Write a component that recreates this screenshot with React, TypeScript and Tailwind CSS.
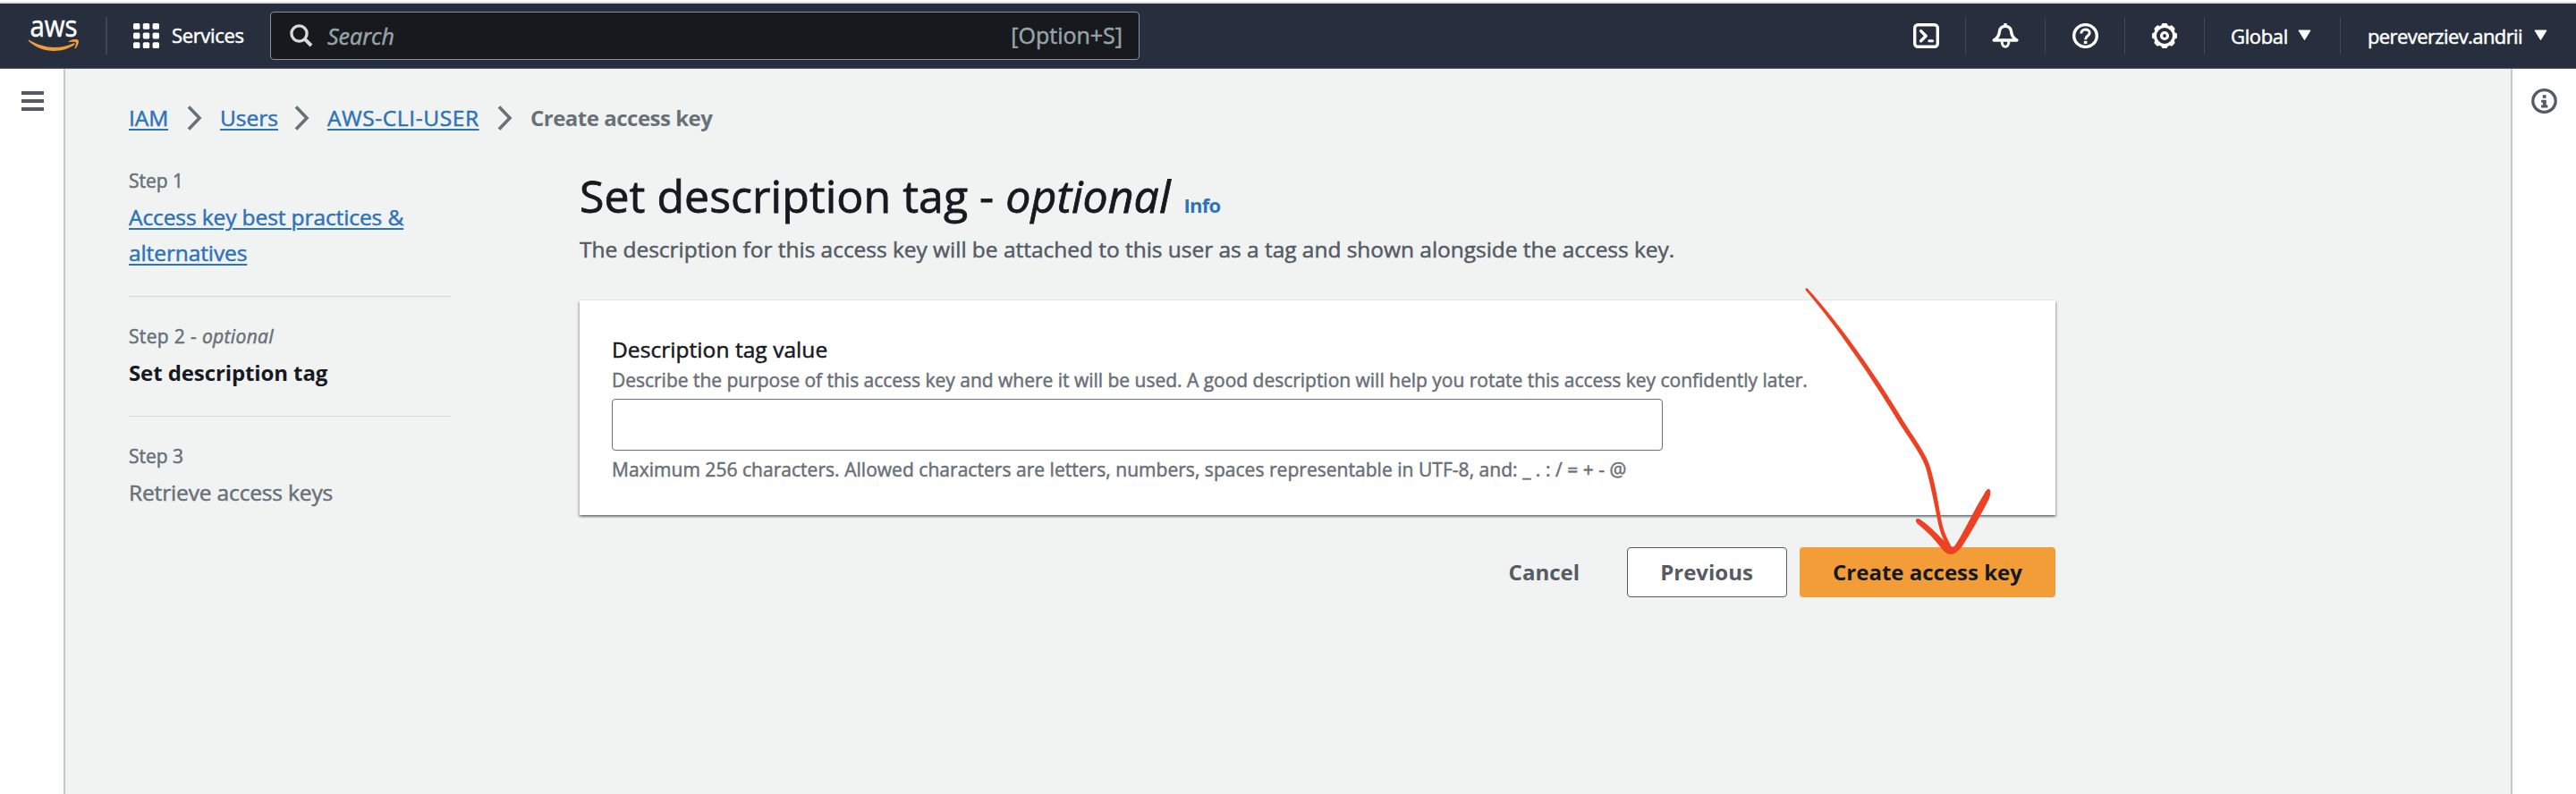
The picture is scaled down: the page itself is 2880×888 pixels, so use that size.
import React from "react";
import type { ReactNode } from "react";

function AwsLogo() {
  return (
    <svg width="60" height="72" viewBox="0 -16 60 72" className="block shrink-0 overflow-visible">
      <text x="1.5" y="20.8" fontSize="32" fontFamily="'Open Sans', sans-serif" fill="#fff" stroke="#fff" strokeWidth="0.5" textLength="53" lengthAdjust="spacingAndGlyphs">
        aws
      </text>
      <path
        d="M0.3 24.6 C17 34.5 34 35.5 50 28.4 C51.5 27.8 52.4 29.2 51 30.3 C37 40 14 39.5 0 26 C-0.5 25.3 -0.2 24.4 0.3 24.6 Z"
        fill="#f29d38"
      />
      <path
        d="M44.8 26.2 C48 23.8 54.6 23.6 55.6 24.9 C56.6 26.4 55.2 31.6 52.3 34.2 C51.7 34.7 51.2 34.4 51.5 33.7 C52.4 31.4 53.4 28.2 52.9 27.4 C52.2 26.5 48.2 26.6 45.4 27 C44.6 27.1 44.4 26.5 44.8 26.2 Z"
        fill="#f29d38"
      />
    </svg>
  );
}

function GridIcon() {
  return (
    <svg width="29" height="28" viewBox="0 0 29 28" className="block" fill="#fff">
      {[0, 10.8, 21.6].map((x) =>
        [0, 10.6, 21.2].map((y) => <rect key={`${x}-${y}`} x={x} y={y} width="7.4" height="6.8" rx="1.6" />)
      )}
    </svg>
  );
}

function SearchIcon() {
  return (
    <svg width="26" height="26" viewBox="0 0 26 26" className="block" fill="none" stroke="#d5dbdb">
      <circle cx="10.5" cy="10.5" r="8.6" strokeWidth="3.4" />
      <path d="M16.7 16.7 L24 24" strokeWidth="4" />
    </svg>
  );
}

function TerminalIcon() {
  return (
    <svg width="29" height="28" viewBox="0 0 29 28" className="block" fill="none" stroke="#fff" strokeWidth="3.4">
      <rect x="1.7" y="1.7" width="25.6" height="24.6" rx="3.6" />
      <path d="M8.6 8.6 L14.2 14.2 L8.6 19.8" strokeLinecap="round" strokeLinejoin="round" />
      <path d="M17.8 19.8 H21.6" strokeLinecap="round" strokeWidth="3" />
    </svg>
  );
}

function BellIcon() {
  return (
    <svg width="30" height="28" viewBox="0 0 30 28" className="block" fill="none" stroke="#fff" strokeWidth="3.4" strokeLinejoin="round">
      <path d="M2.2 19 C6.5 16.5 8 13.5 8.4 9.5 C8.9 5 11.6 3.4 15 3.4 C18.4 3.4 21.1 5 21.6 9.5 C22 13.5 23.5 16.5 27.8 19 Z" />
      <path d="M15 0 V3" />
      <path d="M11.2 20.5 C11 28.2 19 28.2 18.8 20.5" strokeWidth="3" />
    </svg>
  );
}

function HelpIcon() {
  return (
    <svg width="29" height="28" viewBox="0 0 29 28" className="block" fill="none" stroke="#fff" strokeWidth="3.4">
      <ellipse cx="14.5" cy="14" rx="12.8" ry="12.4" />
      <path d="M9.8 11.4 C9.8 5.6 19.2 5.6 19.2 10.8 C19.2 14.2 14.6 13.8 14.6 18.2" strokeWidth="3" />
      <path d="M12.8 21.4 H16.4" strokeWidth="3.2" />
    </svg>
  );
}

function GearIcon() {
  return (
    <svg width="30" height="28" viewBox="0 0 30 28" className="block" fill="none" stroke="#fff">
      <circle cx="15" cy="14" r="10.6" strokeWidth="3.2" />
      {[0, 45, 90, 135, 180, 225, 270, 315].map((a) => (
        <path key={a} d="M12.2 2.4 Q12.4 0.8 13.2 0.8 H16.8 Q17.6 0.8 17.8 2.4" fill="#fff" strokeWidth="1.6" transform={`rotate(${a} 15 14)`} />
      ))}
      <circle cx="15" cy="14" r="3.5" strokeWidth="3.2" />
    </svg>
  );
}

function InfoIcon() {
  return (
    <svg width="29" height="28" viewBox="0 0 29 28" className="block" fill="none" stroke="#545b64">
      <ellipse cx="14.5" cy="14" rx="12.7" ry="12.3" strokeWidth="3.3" />
      <path d="M12.8 9 H16.6" strokeWidth="3.6" />
      <path d="M11.2 14.2 H16.6 M11 20 H18.4" strokeWidth="3" />
      <path d="M14.8 13 V20" strokeWidth="3.8" />
    </svg>
  );
}

function Chevron() {
  return (
    <svg width="17" height="28" viewBox="0 0 17 28" className="block shrink-0" fill="none" stroke="#687078" strokeWidth="3.6">
      <path d="M2 1.5 L14 14 L2 26.5" />
    </svg>
  );
}

function Caret() {
  return (
    <svg width="15" height="13" viewBox="0 0 15 13" className="block shrink-0">
      <path d="M1 1 H14 L7.5 11.6 Z" fill="#fff" stroke="#fff" strokeLinejoin="round" />
    </svg>
  );
}

function IconCell({ children }: { children: ReactNode }) {
  return <div className="flex h-[42px] w-[89px] items-center justify-center border-r border-[#414750]">{children}</div>;
}

function Header() {
  return (
    <header className="flex h-[73px] items-center border-b border-[#545b64] bg-[#272f3e] pb-[1px] text-[22px] text-white [-webkit-text-stroke:0.5px]">
      <div className="flex h-[42px] w-[120px] items-center border-r-2 border-[#414750] pl-8">
        <AwsLogo />
      </div>
      <div className="flex w-[182px] items-center gap-[14px] pl-[29px]">
        <GridIcon />
        <span className="tracking-[-0.35px]">Services</span>
      </div>
      <div className="flex h-[54px] w-[972px] items-center rounded-[4px] border border-[#879596] bg-[#18191e] pl-[21px] pr-[18px] text-[25px] text-[#95a5a6]">
        <SearchIcon />
        <span className="ml-4 flex-1 pt-[2px] italic">Search</span>
        <span className="pt-[1px]">[Option+S]</span>
      </div>
      <div className="ml-auto flex h-[42px] items-center">
        <IconCell><TerminalIcon /></IconCell>
        <IconCell><BellIcon /></IconCell>
        <IconCell><HelpIcon /></IconCell>
        <IconCell><GearIcon /></IconCell>
        <div className="flex h-[42px] w-[152px] items-center justify-between border-r border-[#414750] pl-[29px] pr-[32px]">
          <span className="pt-[1px] tracking-[-0.35px]">Global</span>
          <Caret />
        </div>
        <div className="flex h-[42px] w-[263px] items-center justify-between pl-[30px] pr-[32px]">
          <span className="pt-[1px] tracking-[-0.6px]">pereverziev.andrii</span>
          <Caret />
        </div>
      </div>
    </header>
  );
}

const link = "text-[#2e73b8] underline decoration-2 underline-offset-[3px]";

function Breadcrumbs() {
  return (
    <nav className="flex h-10 items-center text-[24.5px] leading-10 text-[#687078]">
      <a className={`${link} w-[65px] whitespace-nowrap`}><span className="tracking-[-0.1px]">IAM</span></a>
      <Chevron />
      <a className={`${link} ml-5 w-[83px] whitespace-nowrap`}>Users</a>
      <Chevron />
      <a className={`${link} ml-5 w-[190px] whitespace-nowrap tracking-[0.6px]`}>AWS-CLI-USER</a>
      <Chevron />
      <span className="ml-[20px] whitespace-nowrap text-[24px] font-bold tracking-[-0.5px] [-webkit-text-stroke:0px]">Create access key</span>
    </nav>
  );
}

function Steps() {
  return (
    <ol className="w-[360px] shrink-0 text-[24.5px] leading-10 text-[#687078]">
      <li className="border-b border-[#d5dbdb] pb-[28px] pt-[1px]">
        <div className="text-[21px] leading-[42px]">Step 1</div>
        <a className={`${link} block tracking-[-0.1px]`}>Access key best practices &amp;<br />alternatives</a>
      </li>
      <li className="border-b border-[#d5dbdb] pb-[28px] pt-[23px]">
        <div className="text-[21px] leading-[42px] tracking-[0.35px]">Step 2 - <i>optional</i></div>
        <div className="text-[24px] font-bold tracking-[-0.1px] text-[#16191f] [-webkit-text-stroke:0px]">Set description tag</div>
      </li>
      <li className="pt-[23px]">
        <div className="text-[21px] leading-[42px]">Step 3</div>
        <div className="tracking-[-0.15px]">Retrieve access keys</div>
      </li>
    </ol>
  );
}

function DescriptionCard() {
  return (
    <section className="mt-[37px] h-[240px] bg-white px-9 pt-9 text-[21px] leading-[30px] text-[#687078] shadow-[0_2px_2px_rgba(0,28,36,0.35),2px_2px_2px_rgba(0,28,36,0.15),-2px_2px_2px_rgba(0,28,36,0.15),0_-1px_0_#e4e8e8]">
      <label className="block text-[24.5px] leading-[38px] tracking-[0.06px] text-[#16191f]">Description tag value</label>
      <p className="whitespace-nowrap tracking-[-0.015px]">
        Describe the purpose of this access key and where it will be used. A good description will help you rotate this access key confidently later.
      </p>
      <input className="mt-[6px] block h-[58px] w-[1175px] rounded-[4px] border border-[#687078] bg-white" />
      <p className="mt-[6px] whitespace-nowrap tracking-[0.035px]">
        Maximum 256 characters. Allowed characters are letters, numbers, spaces representable in UTF-8, and: _ . : / = + - @
      </p>
    </section>
  );
}

function Actions() {
  return (
    <div className="mt-9 flex h-14 justify-end text-[24px] font-bold text-[#545b64] [-webkit-text-stroke:0px]">
      <button className="mr-[53px]">Cancel</button>
      <button className="mr-[14px] w-[179px] rounded-[4px] border border-[#545b64] bg-white pr-[1px]">Previous</button>
      <button className="w-[286px] rounded-[4px] bg-[#f29d38] text-[#16191f]">Create access key</button>
    </div>
  );
}

function HandDrawnArrow() {
  return (
    <svg className="pointer-events-none absolute left-[2010px] top-[310px]" width="230" height="320" viewBox="2010 310 230 320">
      <path
        d="M2019 322.5 C2018 324 2019 325 2020 326 C2048 359 2087 413 2122 471 C2134 490 2148 508 2153 523 C2158 540 2163 566 2166.5 583 C2168.5 594 2172 603 2178 613 L2182 612 C2176 601 2172.5 592 2170.5 582 C2167 562 2163.5 540 2157.5 521 C2152 505 2138 487 2127 469 C2092 411 2052 357 2022 324 C2021 322.8 2020 321.8 2019 322.5 Z"
        fill="#ee4023"
      />
      <path
        d="M2142.2 583.6 C2141 580 2144 579 2147 581 C2159 589 2170 602 2180 611 Q2182.5 612 2185 611 C2195 597 2207 570 2218.5 552 C2220.5 548 2223 545.5 2224.6 547.5 C2226 550 2225 555 2223.5 558.5 C2214 577 2204 595 2194 610.5 C2189 617 2185 620 2180.5 620 C2175 619.5 2171 614 2168 610 C2160 599.5 2151 592 2144 586 Q2142.7 584.8 2142.2 583.6 Z"
        fill="#ee4023"
      />
    </svg>
  );
}

export default function App() {
  return (
    <div className="relative flex h-[888px] w-[2880px] flex-col overflow-hidden bg-white font-['Open_Sans','Noto_Sans',sans-serif]">
      <div className="mt-[2px] h-[2px] shrink-0 bg-[#dadada]" />
      <Header />
      <div className="flex flex-1 [-webkit-text-stroke:0.5px]">
        <aside className="flex w-[73px] flex-col gap-[5px] border-r-2 border-[#c3caca] pl-6 pt-[25px]">
          <div className="h-1 w-[25px] bg-[#545b64]" />
          <div className="h-1 w-[25px] bg-[#545b64]" />
          <div className="h-1 w-[25px] bg-[#545b64]" />
        </aside>
        <main className="flex-1 bg-[#f1f3f3] pl-[71px] pt-[35px]">
          <Breadcrumbs />
          <div className="mt-7 flex">
            <Steps />
            <div className="ml-36 w-[1650px] pt-[9px]">
              <h1 className="flex h-[60px] items-baseline whitespace-nowrap text-[50px] leading-[60px] tracking-[0.04px] text-[#16191f] [-webkit-text-stroke:0.8px]">
                <span>Set description tag - <i>optional</i></span>
                <a className="ml-[15px] text-[22px] font-bold tracking-[-0.8px] text-[#2e73b8] [-webkit-text-stroke:0px]">Info</a>
              </h1>
              <p className="mt-[10px] h-10 whitespace-nowrap text-[24.5px] leading-10 tracking-[-0.03px] text-[#545b64]">
                The description for this access key will be attached to this user as a tag and shown alongside the access key.
              </p>
              <DescriptionCard />
              <Actions />
            </div>
          </div>
        </main>
        <aside className="flex w-[73px] justify-center border-l-2 border-[#c3caca] pt-[22px]">
          <InfoIcon />
        </aside>
      </div>
      <HandDrawnArrow />
    </div>
  );
}
